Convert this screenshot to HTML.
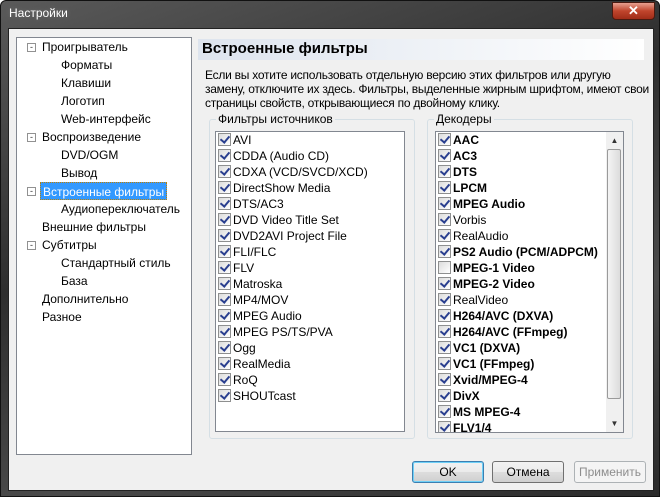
<!DOCTYPE html><html><head><meta charset="utf-8"><style>
*{box-sizing:border-box}body{margin:0;width:660px;height:497px;overflow:hidden;font-family:"Liberation Sans",sans-serif;font-size:12px;color:#000;background:#fff}
.win{position:absolute;left:0;top:0;width:660px;height:497px;background:linear-gradient(160deg,#5a5a5a,#2e2e2e 40%,#4a4a4a 70%,#2a2a2a);border:1px solid #111;border-radius:6px 6px 0 0}
.title{position:absolute;left:8px;top:5px;color:#fff;font-size:12px;text-shadow:0 0 6px #fff3}
.close{position:absolute;left:611px;top:1px;width:43px;height:18px;border-radius:0 0 4px 4px;background:linear-gradient(#e8a090,#c0442c 50%,#a02c18);border:1px solid #4a1a10;color:#fff;font-weight:bold;text-align:center;font-size:13px;line-height:16px}
.client{position:absolute;left:7px;top:27px;width:646px;height:463px;background:#f0f0f0;border:1px solid #222}
.tree{position:absolute;left:7px;top:8px;width:176px;height:418px;background:#fff;border:1px solid #828790}
.ti{position:absolute;white-space:nowrap;height:16px;line-height:16px}
.pm{position:absolute;width:9px;height:9px;border:1px solid #919191;background:#fff;font-size:9px;line-height:6px;text-align:center;color:#333}
.hdr{position:absolute;left:189px;top:10px;width:446px;height:21px;background:linear-gradient(90deg,#dde4ee,#fff);font-weight:bold;font-size:15px;padding-left:4px;line-height:20px}
.desc{position:absolute;left:196px;top:39px;width:445px;line-height:14px;letter-spacing:-0.25px}
.gb{position:absolute;border:1px solid #d5dfe5;border-radius:3px}
.gb span{position:absolute;top:-8px;left:6px;background:#f0f0f0;padding:0 2px}
.lst{position:absolute;background:#fff;border:1px solid #828790;overflow:hidden}
.r{height:16px;line-height:16px;white-space:nowrap;padding-left:2px}
.cb{display:inline-block;width:13px;height:13px;border:1px solid #8e8f8f;background:linear-gradient(135deg,#dcdcdc,#fff);vertical-align:-2px;margin-right:2px;position:relative}
.cb.c::after{content:"";position:absolute;left:3px;top:0px;width:4px;height:7px;border:solid #2a3f8f;border-width:0 2px 2px 0;transform:rotate(40deg)}
.b{font-weight:bold}
.sb{position:absolute;right:0;top:0;width:17px;height:100%;background:#f0f0f0}
.btn{position:absolute;top:432px;width:72px;height:22px;border:1px solid #707070;border-radius:3px;background:linear-gradient(#f2f2f2,#ebebeb 50%,#dddddd 51%,#cfcfcf);text-align:center;line-height:20px}
</style></head><body><div class="win">
<div class="title">Настройки</div><div class="close">✕</div>
<div class="client">
<div class="tree" style="">
<div style="position:absolute;left:0;top:-4px;width:176px;height:400px">
<div class="pm" style="left:10px;top:9px">-</div><div class="ti" style="left:25px;top:5px">Проигрыватель</div>
<div class="ti" style="left:44px;top:23px">Форматы</div><div class="ti" style="left:44px;top:41px">Клавиши</div><div class="ti" style="left:44px;top:59px">Логотип</div><div class="ti" style="left:44px;top:77px">Web-интерфейс</div>
<div class="pm" style="left:10px;top:99px">-</div><div class="ti" style="left:25px;top:95px">Воспроизведение</div>
<div class="ti" style="left:44px;top:113px">DVD/OGM</div><div class="ti" style="left:44px;top:131px">Вывод</div>
<div class="pm" style="left:10px;top:153px">-</div><div class="ti" style="left:23px;top:148px;background:#3399ff;color:#fff;padding:1px 2px;height:18px;border:1px dotted #c08000">Встроенные фильтры</div>
<div class="ti" style="left:44px;top:167px">Аудиопереключатель</div>
<div class="ti" style="left:25px;top:185px">Внешние фильтры</div>
<div class="pm" style="left:10px;top:207px">-</div><div class="ti" style="left:25px;top:203px">Субтитры</div>
<div class="ti" style="left:44px;top:221px">Стандартный стиль</div><div class="ti" style="left:44px;top:239px">База</div>
<div class="ti" style="left:25px;top:257px">Дополнительно</div><div class="ti" style="left:25px;top:275px">Разное</div>
</div></div>
<div class="hdr">Встроенные фильтры</div>
<div class="desc">Если вы хотите использовать отдельную версию этих фильтров или другую замену, отключите их здесь. Фильтры, выделенные жирным шрифтом, имеют свои страницы свойств, открывающиеся по двойному клику.</div>
<div class="gb" style="left:200px;top:90px;width:206px;height:320px"><span>Фильтры источников</span></div>
<div class="lst" style="left:206px;top:102px;width:190px;height:301px;padding-top:0px">
<div class="r"><i class="cb c"></i>AVI</div><div class="r"><i class="cb c"></i>CDDA (Audio CD)</div><div class="r"><i class="cb c"></i>CDXA (VCD/SVCD/XCD)</div><div class="r"><i class="cb c"></i>DirectShow Media</div><div class="r"><i class="cb c"></i>DTS/AC3</div><div class="r"><i class="cb c"></i>DVD Video Title Set</div><div class="r"><i class="cb c"></i>DVD2AVI Project File</div><div class="r"><i class="cb c"></i>FLI/FLC</div><div class="r"><i class="cb c"></i>FLV</div><div class="r"><i class="cb c"></i>Matroska</div><div class="r"><i class="cb c"></i>MP4/MOV</div><div class="r"><i class="cb c"></i>MPEG Audio</div><div class="r"><i class="cb c"></i>MPEG PS/TS/PVA</div><div class="r"><i class="cb c"></i>Ogg</div><div class="r"><i class="cb c"></i>RealMedia</div><div class="r"><i class="cb c"></i>RoQ</div><div class="r"><i class="cb c"></i>SHOUTcast</div>
</div>
<div class="gb" style="left:418px;top:90px;width:206px;height:320px"><span>Декодеры</span></div>
<div class="lst" style="left:426px;top:102px;width:189px;height:302px;padding-top:0px">
<div class="r b"><i class="cb c"></i>AAC</div><div class="r b"><i class="cb c"></i>AC3</div><div class="r b"><i class="cb c"></i>DTS</div><div class="r b"><i class="cb c"></i>LPCM</div><div class="r b"><i class="cb c"></i>MPEG Audio</div><div class="r"><i class="cb c"></i>Vorbis</div><div class="r"><i class="cb c"></i>RealAudio</div><div class="r b"><i class="cb c"></i>PS2 Audio (PCM/ADPCM)</div><div class="r b"><i class="cb"></i>MPEG-1 Video</div><div class="r b"><i class="cb c"></i>MPEG-2 Video</div><div class="r"><i class="cb c"></i>RealVideo</div><div class="r b"><i class="cb c"></i>H264/AVC (DXVA)</div><div class="r b"><i class="cb c"></i>H264/AVC (FFmpeg)</div><div class="r b"><i class="cb c"></i>VC1 (DXVA)</div><div class="r b"><i class="cb c"></i>VC1 (FFmpeg)</div><div class="r b"><i class="cb c"></i>Xvid/MPEG-4</div><div class="r b"><i class="cb c"></i>DivX</div><div class="r b"><i class="cb c"></i>MS MPEG-4</div><div class="r b"><i class="cb c"></i>FLV1/4</div>
<div class="sb"><div style="text-align:center;font-size:8px;color:#333;margin-top:4px">▲</div><div style="position:absolute;left:1px;top:17px;width:14px;height:250px;border:1px solid #9a9a9a;border-radius:2px;background:linear-gradient(90deg,#f4f4f4,#dcdcdc)"></div><div style="position:absolute;bottom:4px;width:17px;text-align:center;font-size:8px;color:#333">▼</div></div>
</div>
<div class="btn" style="left:403px;border-color:#3c7fb1;box-shadow:inset 0 0 0 1px #6fd0f7">OK</div>
<div class="btn" style="left:483px">Отмена</div>
<div class="btn" style="left:565px;color:#8d8d8d;border-color:#adb2b5;background:#f4f4f4">Применить</div>
</div></div></body></html>
